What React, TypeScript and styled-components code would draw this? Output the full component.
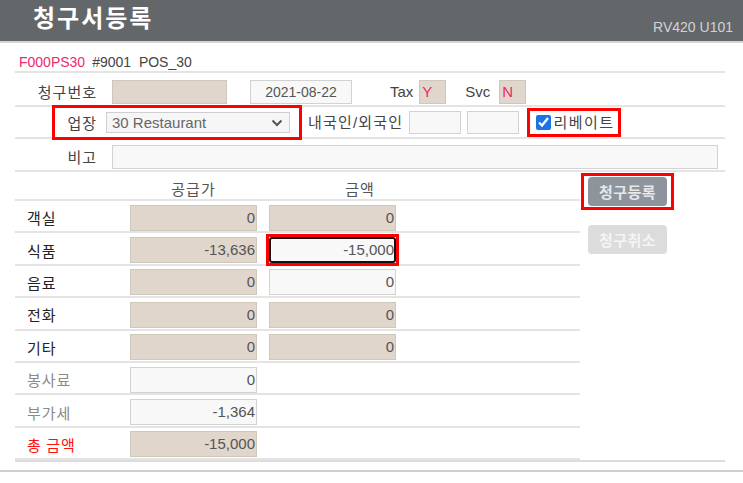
import styled, { createGlobalStyle } from "styled-components";

const GlobalStyle = createGlobalStyle`
  html, body {
    margin: 0;
    padding: 0;
    background: #fff;
  }
  body {
    font-family: "Liberation Sans", "Noto Sans CJK KR", sans-serif;
    color: #333;
  }
  * {
    box-sizing: border-box;
  }
`;

type Tone = "beige" | "white" | "focus";

const Page = styled.div`
  width: 743px;
  height: 483px;
  overflow: hidden;
  background: #fff;
`;

const Header = styled.header`
  height: 43px;
  background: #646769;
  border-bottom: 2px solid #d4d4d4;
  display: flex;
  justify-content: space-between;
  padding: 0 10px 0 33px;
`;

const Title = styled.h1`
  margin: 0;
  font-family: "Noto Sans CJK KR", sans-serif;
  font-weight: 700;
  font-size: 24px;
  line-height: 34px;
  color: #fff;
  letter-spacing: 2px;
`;

const Version = styled.span`
  align-self: flex-end;
  margin-bottom: 6px;
  font-size: 14px;
  color: #d2d3d4;
`;

const Body = styled.div`
  padding: 0 18px 0 15px;
`;

const Row = styled.div<{ $h: number; $top?: number }>`
  display: flex;
  align-items: center;
  height: ${(p) => p.$h}px;
  padding-top: ${(p) => p.$top ?? 0}px;
  border-bottom: 2px solid #e4e4e4;
`;

const Info = styled.div`
  padding-left: 4px;
  font-size: 14px;
  color: #444;
  .code {
    color: #ec2a6a;
    margin-right: 7px;
  }
`;

const Label = styled.span<{ $w: number }>`
  width: ${(p) => p.$w}px;
  flex: none;
  text-align: right;
  font-family: "Noto Sans CJK KR", sans-serif;
  font-size: 15px;
  line-height: 20px;
  letter-spacing: 1px;
  color: #444;
`;

const Text = styled.span<{ $ml: number; $ls?: number }>`
  margin-left: ${(p) => p.$ml}px;
  font-family: "Liberation Sans", "Noto Sans CJK KR", sans-serif;
  font-size: 15px;
  line-height: 20px;
  letter-spacing: ${(p) => p.$ls ?? 0}px;
  color: #444;
  white-space: nowrap;
`;

const Box = styled.div<{
  $w: number;
  $h?: number;
  $ml?: number;
  $tone?: Tone;
  $align?: "left" | "center" | "right";
}>`
  flex: none;
  width: ${(p) => p.$w}px;
  height: ${(p) => p.$h ?? 24}px;
  margin-left: ${(p) => p.$ml ?? 0}px;
  background: ${(p) => (p.$tone === "beige" ? "#e1d6cb" : "#f8f8f8")};
  border: 1px solid ${(p) => (p.$tone === "beige" ? "#cfc6bc" : "#d2d2d2")};
  text-align: ${(p) => p.$align ?? "left"};
  padding: 0 2px;
  font-size: 14px;
  line-height: ${(p) => (p.$h ?? 24) - 2}px;
  color: #555;
  overflow: hidden;
  white-space: nowrap;
`;

const Flag = styled(Box)`
  color: #ec2a6a;
  font-size: 15px;
`;

const Highlight = styled.div<{ $ml: number; $h: number; $pad: string }>`
  display: flex;
  align-items: center;
  margin-left: ${(p) => p.$ml}px;
  height: ${(p) => p.$h}px;
  padding: ${(p) => p.$pad};
  outline: 3px solid #ff0000;
`;

const SelectBox = styled.div`
  display: flex;
  align-items: center;
  justify-content: space-between;
  width: 184px;
  height: 21px;
  margin-left: 9px;
  padding: 0 6px 0 5px;
  background: #f6f6f6;
  border: 1px solid #cfcfcf;
  font-size: 15px;
  color: #666;
`;

const Check = styled.input`
  width: 15px;
  height: 15px;
  margin: 0;
  accent-color: #1a73e8;
`;

const Lower = styled.div`
  display: flex;
  border-bottom: 2px solid #dcdcdc;
`;

const Table = styled.div`
  width: 565px;
  flex: none;
`;

const HeadRow = styled.div`
  display: flex;
  align-items: center;
  height: 29px;
  padding: 6px 0 0 115px;
  border-bottom: 2px solid #e4e4e4;
`;

const HeadCell = styled.span<{ $w: number; $ml?: number }>`
  width: ${(p) => p.$w}px;
  margin-left: ${(p) => p.$ml ?? 0}px;
  text-align: center;
  font-family: "Noto Sans CJK KR", sans-serif;
  font-size: 15px;
  letter-spacing: 1px;
  color: #555;
`;

const DataRow = styled.div`
  display: flex;
  align-items: center;
  height: 32.4px;
  padding-top: 3px;
  border-bottom: 2px solid #e4e4e4;
`;

const RowLabel = styled.span<{ $tone?: "normal" | "muted" | "total" }>`
  width: 115px;
  flex: none;
  padding-left: 12px;
  font-family: "Noto Sans CJK KR", sans-serif;
  font-size: 15px;
  letter-spacing: 1px;
  color: ${(p) =>
    p.$tone === "muted" ? "#8a8a8a" : p.$tone === "total" ? "#ff1010" : "#222"};
`;

const Marked = styled.div<{ $ml?: number }>`
  display: flex;
  margin-left: ${(p) => p.$ml ?? 0}px;
  outline: 3px solid #ff0000;
`;

const Amount = styled.div<{ $tone: Tone; $ml?: number }>`
  flex: none;
  width: 127px;
  height: 26px;
  margin-left: ${(p) => p.$ml ?? 0}px;
  padding-right: ${(p) => (p.$tone === "focus" ? 0 : 1)}px;
  background: ${(p) => (p.$tone === "beige" ? "#e1d6cb" : "#f8f8f8")};
  border: ${(p) =>
    p.$tone === "focus"
      ? "2px solid #111"
      : `1px solid ${p.$tone === "beige" ? "#cfc6bc" : "#d2d2d2"}`};
  border-radius: ${(p) => (p.$tone === "focus" ? 3 : 0)}px;
  text-align: right;
  font-size: 15px;
  line-height: ${(p) => (p.$tone === "focus" ? 22 : 24)}px;
  color: #555;
  overflow: hidden;
  white-space: nowrap;
`;

const Actions = styled.div`
  display: flex;
  flex-direction: column;
  align-items: flex-start;
  padding: 4px 0 0 4px;
  gap: 17px;
`;

const ButtonFrame = styled.div<{ $marked?: boolean }>`
  padding: 1px 4px;
  outline: ${(p) => (p.$marked ? "3px solid #ff0000" : "none")};
`;

const Button = styled.button<{ $disabled?: boolean }>`
  width: 79px;
  height: 29px;
  border: none;
  border-radius: 4px;
  background: ${(p) => (p.$disabled ? "#dcdcdc" : "#8d949b")};
  color: ${(p) => (p.$disabled ? "#f4f4f4" : "#e6e8ea")};
  font-family: "Noto Sans CJK KR", sans-serif;
  font-size: 15px;
  font-weight: 700;
  letter-spacing: 0.5px;
  padding: 0;
`;

const Footer = styled.div`
  margin-top: 8px;
  border-top: 2px solid #cfcfcf;
`;

const rows: {
  label: string;
  tone?: "normal" | "muted" | "total";
  supply: string;
  supplyTone: Tone;
  amount?: string;
  amountTone?: Tone;
}[] = [
  { label: "객실", supply: "0", supplyTone: "beige", amount: "0", amountTone: "beige" },
  { label: "식품", supply: "-13,636", supplyTone: "beige", amount: "-15,000", amountTone: "focus" },
  { label: "음료", supply: "0", supplyTone: "beige", amount: "0", amountTone: "white" },
  { label: "전화", supply: "0", supplyTone: "beige", amount: "0", amountTone: "beige" },
  { label: "기타", supply: "0", supplyTone: "beige", amount: "0", amountTone: "beige" },
  { label: "봉사료", tone: "muted", supply: "0", supplyTone: "white" },
  { label: "부가세", tone: "muted", supply: "-1,364", supplyTone: "white" },
  { label: "총 금액", tone: "total", supply: "-15,000", supplyTone: "beige" },
];

const Chevron = () => (
  <svg width="12" height="8" viewBox="0 0 12 8">
    <path d="M1.5 1.5 L6 6 L10.5 1.5" fill="none" stroke="#555" strokeWidth="2" />
  </svg>
);

export default function App() {
  return (
    <Page>
      <GlobalStyle />
      <Header>
        <Title>청구서등록</Title>
        <Version>RV420 U101</Version>
      </Header>
      <Body>
        <Row $h={30} $top={9}>
          <Info>
            <span className="code">F000PS30</span>#9001&nbsp; POS_30
          </Info>
        </Row>
        <Row $h={34} $top={5}>
          <Label $w={82}>청구번호</Label>
          <Box $w={115} $ml={15} $tone="beige" />
          <Box $w={102} $ml={23} $align="center">
            2021-08-22
          </Box>
          <Text $ml={38}>Tax</Text>
          <Flag $w={27} $ml={6} $tone="beige">
            Y
          </Flag>
          <Text $ml={19}>Svc</Text>
          <Flag $w={27} $ml={9} $tone="beige">
            N
          </Flag>
        </Row>
        <Row $h={32} $top={1}>
          <Highlight $ml={40} $h={29} $pad="0 9px 0 0">
            <Label $w={42}>업장</Label>
            <SelectBox>
              <span>30 Restaurant</span>
              <Chevron />
            </SelectBox>
          </Highlight>
          <Text $ml={9} $ls={1.2}>
            내국인/외국인
          </Text>
          <Box $w={52} $ml={6} $h={23} />
          <Box $w={52} $ml={6} $h={23} />
          <Highlight $ml={11} $h={23} $pad="0 3px 0 6px">
            <Check type="checkbox" checked readOnly />
            <Text $ml={2} $ls={1.5}>
              리베이트
            </Text>
          </Highlight>
        </Row>
        <Row $h={33} $top={4}>
          <Label $w={82}>비고</Label>
          <Box $w={606} $ml={15} />
        </Row>
        <Lower>
          <Table>
            <HeadRow>
              <HeadCell $w={127}>공급가</HeadCell>
              <HeadCell $w={182} $ml={12}>
                금액
              </HeadCell>
            </HeadRow>
            {rows.map((r) => (
              <DataRow key={r.label}>
                <RowLabel $tone={r.tone}>{r.label}</RowLabel>
                <Amount $tone={r.supplyTone}>{r.supply}</Amount>
                {r.amount !== undefined &&
                  r.amountTone &&
                  (r.amountTone === "focus" ? (
                    <Marked $ml={12}>
                      <Amount $tone="focus">{r.amount}</Amount>
                    </Marked>
                  ) : (
                    <Amount $tone={r.amountTone} $ml={12}>
                      {r.amount}
                    </Amount>
                  ))}
              </DataRow>
            ))}
          </Table>
          <Actions>
            <ButtonFrame $marked>
              <Button>청구등록</Button>
            </ButtonFrame>
            <ButtonFrame>
              <Button $disabled>청구취소</Button>
            </ButtonFrame>
          </Actions>
        </Lower>
      </Body>
      <Footer />
    </Page>
  );
}
